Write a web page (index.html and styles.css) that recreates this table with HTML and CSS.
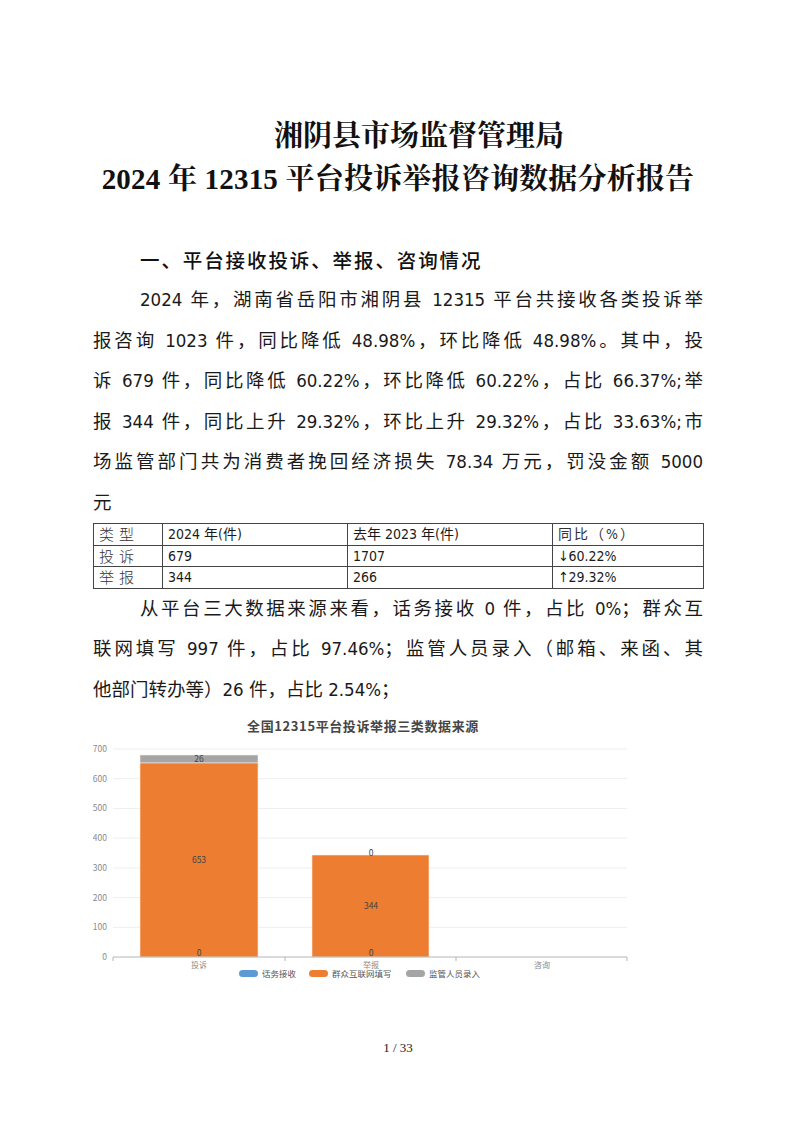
FILE: index.html
```html
<!DOCTYPE html>
<html lang="zh-CN">
<head>
<meta charset="utf-8">
<title>湘阴县市场监督管理局 2024年12315平台投诉举报咨询数据分析报告</title>
<link rel="stylesheet" href="styles.css">
</head>
<body>
<div class="page">
  <h1 class="title">
    <span class="t1">湘阴县市场监督管理局</span>
    <span class="t2">2024 年 12315 平台投诉举报咨询数据分析报告</span>
  </h1>

  <h2 class="heading">一、平台接收投诉、举报、咨询情况</h2>

  <p class="para">
    <span class="ln first">2024 年，湖南省岳阳市湘阴县 12315 平台共接收各类投诉举</span>
    <span class="ln">报咨询 1023 件，同比降低 48.98%，环比降低 48.98%。其中，投</span>
    <span class="ln">诉 679 件，同比降低 60.22%，环比降低 60.22%，占比 66.37%;举</span>
    <span class="ln">报 344 件，同比上升 29.32%，环比上升 29.32%，占比 33.63%;市</span>
    <span class="ln">场监管部门共为消费者挽回经济损失 78.34 万元，罚没金额 5000</span>
    <span class="ln last">元</span>
  </p>

  <table class="data">
    <colgroup>
      <col class="c1"><col class="c2"><col class="c3"><col class="c4">
    </colgroup>
    <tr>
      <td class="cat">类型</td>
      <td>2024 年(件)</td>
      <td>去年 2023 年(件)</td>
      <td class="light">同比（%）</td>
    </tr>
    <tr>
      <td class="cat">投诉</td>
      <td>679</td>
      <td>1707</td>
      <td>↓60.22%</td>
    </tr>
    <tr>
      <td class="cat">举报</td>
      <td>344</td>
      <td>266</td>
      <td>↑29.32%</td>
    </tr>
  </table>

  <p class="para">
    <span class="ln first">从平台三大数据来源来看，话务接收 0 件，占比 0%；群众互</span>
    <span class="ln">联网填写 997 件，占比 97.46%；监管人员录入（邮箱、来函、其</span>
    <span class="ln last">他部门转办等）26 件，占比 2.54%；</span>
  </p>

  <svg class="chart" width="610" height="275" viewBox="0 0 610 275" xmlns="http://www.w3.org/2000/svg">
    <text class="ch-title" x="270" y="21" text-anchor="middle">全国12315平台投诉举报三类数据来源</text>

    <g class="grid">
      <line x1="20" y1="39" x2="534" y2="39"/>
      <line x1="20" y1="68.7" x2="534" y2="68.7"/>
      <line x1="20" y1="98.4" x2="534" y2="98.4"/>
      <line x1="20" y1="128.1" x2="534" y2="128.1"/>
      <line x1="20" y1="157.9" x2="534" y2="157.9"/>
      <line x1="20" y1="187.6" x2="534" y2="187.6"/>
      <line x1="20" y1="217.3" x2="534" y2="217.3"/>
    </g>

    <g class="ylab">
      <text x="14" y="42">700</text>
      <text x="14" y="71.7">600</text>
      <text x="14" y="101.4">500</text>
      <text x="14" y="131.1">400</text>
      <text x="14" y="160.9">300</text>
      <text x="14" y="190.6">200</text>
      <text x="14" y="220.3">100</text>
      <text x="14" y="250">0</text>
    </g>

    <g class="bars">
      <rect x="47" y="45" width="118" height="8" fill="#a5a5a5"/>
      <rect x="47" y="53" width="118" height="194" fill="#ed7d31"/>
      <rect x="219" y="145" width="117" height="102" fill="#ed7d31"/>
    </g>

    <g class="axis">
      <line x1="20" y1="247" x2="534" y2="247"/>
      <line x1="20" y1="247" x2="20" y2="251"/>
      <line x1="192" y1="247" x2="192" y2="251"/>
      <line x1="363" y1="247" x2="363" y2="251"/>
      <line x1="534" y1="247" x2="534" y2="251"/>
    </g>

    <g class="vlab">
      <text x="106" y="52">26</text>
      <text x="106" y="153">653</text>
      <text x="106" y="245.5">0</text>
      <text x="278" y="146">0</text>
      <text x="278" y="199">344</text>
      <text x="278" y="245.5">0</text>
    </g>

    <g class="xlab">
      <text x="106" y="257.5">投诉</text>
      <text x="278" y="257.5">举报</text>
      <text x="449" y="257.5">咨询</text>
    </g>

    <g class="legend">
      <rect x="146" y="260" width="19" height="7" rx="3.5" fill="#5b9bd5"/>
      <text x="169" y="267">话务接收</text>
      <rect x="216" y="260" width="19" height="7" rx="3.5" fill="#ed7d31"/>
      <text x="239" y="267">群众互联网填写</text>
      <rect x="313" y="260" width="19" height="7" rx="3.5" fill="#a5a5a5"/>
      <text x="336" y="267">监管人员录入</text>
    </g>
  </svg>

  <div class="footer">1 / 33</div>
</div>
</body>
</html>
```

FILE: styles.css
```css
html, body {
  margin: 0;
  padding: 0;
  background: #ffffff;
}

.page {
  width: 793px;
  box-sizing: border-box;
  padding: 115px 90px 0 93px;
  color: #1e1e1e;
  font-family: "DejaVu Sans Condensed", "Noto Sans CJK SC", sans-serif;
}

.title {
  margin: 0;
  font-family: "Liberation Serif", "Noto Serif CJK SC", "Noto Sans CJK SC", serif;
  font-weight: bold;
  font-size: 29px;
  line-height: 43px;
  text-align: center;
  color: #111;
}

.title .t1 {
  display: block;
  padding-left: 42px;
}

.title .t2 {
  display: block;
  letter-spacing: 0.2px;
}

.heading {
  margin: 38px 0 0 0;
  padding-left: 47px;
  font-family: "Noto Sans CJK SC", sans-serif;
  font-weight: 500;
  font-size: 19.5px;
  letter-spacing: 1.9px;
  line-height: 41px;
  color: #111;
}

.para {
  margin: 0;
  font-size: 18.5px;
  line-height: 40.5px;
  color: #1a1a1a;
}

.para .ln {
  display: block;
  text-align: justify;
  text-align-last: justify;
  white-space: nowrap;
}

.para .ln.first {
  padding-left: 47px;
}

.para .ln.last {
  text-align-last: left;
}

.data {
  width: 610px;
  border-collapse: collapse;
  table-layout: fixed;
  font-size: 14px;
  color: #1a1a1a;
}

.data .c1 { width: 69px; }
.data .c2 { width: 185px; }
.data .c3 { width: 205px; }
.data .c4 { width: 151px; }

.data td {
  border: 1px solid #444;
  padding: 0 0 0 5px;
  height: 20.5px;
  line-height: 20px;
  white-space: nowrap;
  overflow: hidden;
}

.data td.cat {
  font-family: "Noto Sans CJK SC", sans-serif;
  font-weight: 300;
  font-size: 15px;
  line-height: 20px;
  letter-spacing: 5px;
  color: #333;
}

.data td.light {
  letter-spacing: 2px;
  color: #333;
}

.chart {
  display: block;
  font-family: "Noto Sans CJK SC", "DejaVu Sans", sans-serif;
}

.ch-title {
  font-size: 13px;
  font-weight: bold;
  letter-spacing: 0.6px;
  fill: #464646;
}

.grid line {
  stroke: #eeeeee;
  stroke-width: 1;
}

.axis line {
  stroke: #b5b5b5;
  stroke-width: 1;
}

.ylab text {
  font-size: 8.5px;
  fill: #8a8a8a;
  text-anchor: end;
}

.bars rect {
  stroke: #fbe9de;
  stroke-width: 0.6;
}

.vlab text {
  font-size: 8.5px;
  fill: #444;
  text-anchor: middle;
}

.xlab text {
  font-size: 8px;
  fill: #8a8a8a;
  text-anchor: middle;
}

.legend text {
  font-size: 8.5px;
  fill: #555;
}

.footer {
  margin-top: 53px;
  text-align: center;
  font-family: "Liberation Serif", serif;
  font-size: 13px;
  line-height: 20px;
  color: #222;
}
```
